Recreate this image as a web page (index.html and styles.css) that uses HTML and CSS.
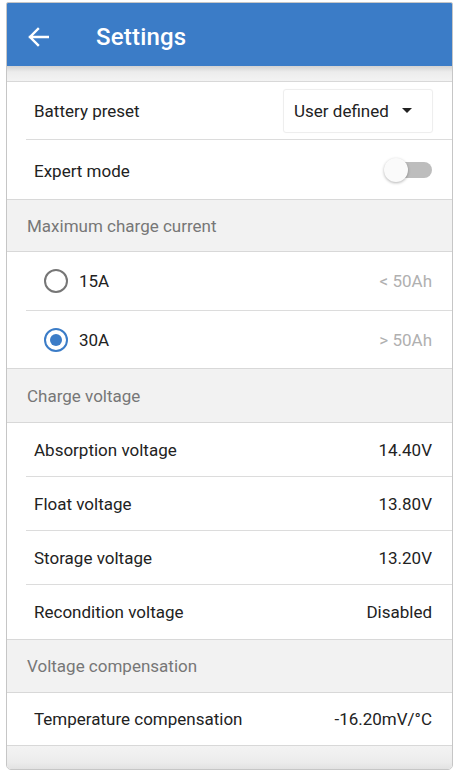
FILE: index.html
```html
<!DOCTYPE html>
<html lang="en">
<head>
  <meta charset="UTF-8" />
  <title>Settings</title>
  <link rel="stylesheet" href="styles.css">
</head>
<body>
  <div class="phone">
    <div class="topbar">
      <svg class="back" width="22" height="20" viewBox="0 0 22 20">
        <path d="M21 10H3M11 2L3 10l8 8" fill="none" stroke="#fff" stroke-width="2.4" stroke-linecap="square"/>
      </svg>
      <span class="title">Settings</span>
    </div>
    <div class="strip"></div>

    <div class="row battery">
      <span>Battery preset</span>
      <div class="dropdown">User defined <span class="caret"></span></div>
    </div>
    <div class="row expert last">
      <span>Expert mode</span>
      <div class="toggle"><span class="thumb"></span></div>
    </div>

    <div class="section h52">Maximum charge current</div>
    <div class="row r59">
      <span class="radio-label"><span class="radio"></span>15A</span>
      <span class="hint">&lt; 50Ah</span>
    </div>
    <div class="row r58 last">
      <span class="radio-label"><span class="radio on"></span>30A</span>
      <span class="hint">&gt; 50Ah</span>
    </div>

    <div class="section h54">Charge voltage</div>
    <div class="row r54"><span>Absorption voltage</span><span>14.40V</span></div>
    <div class="row r54"><span>Float voltage</span><span>13.80V</span></div>
    <div class="row r54"><span>Storage voltage</span><span>13.20V</span></div>
    <div class="row r54 last"><span>Recondition voltage</span><span>Disabled</span></div>

    <div class="section h53">Voltage compensation</div>
    <div class="row r53 last"><span>Temperature compensation</span><span>-16.20mV/°C</span></div>

    <div class="bottom"></div>
  </div>
</body>
</html>
```

FILE: styles.css
```css
body {
  margin: 0;
  background-color: #fff;
  font-family: Roboto, "Noto Sans", sans-serif;
  color: #222;
}

.phone {
  box-sizing: border-box;
  width: 447px;
  height: 768px;
  margin: 2px 0 0 6px;
  border: 1px solid #c6c6c6;
  border-radius: 2px 2px 5px 5px;
  display: flex;
  flex-direction: column;
  overflow: hidden;
}

.topbar {
  height: 63px;
  flex: none;
  background-color: #3b7cc7;
  display: flex;
  align-items: center;
  padding: 4px 0 0 20px;
  box-sizing: border-box;
  color: #fff;
}

.back {
  margin-right: 47px;
}

.title {
  font-size: 24px;
  font-weight: 500;
  letter-spacing: 0.2px;
}

.strip {
  height: 15px;
  flex: none;
  background: linear-gradient(#d2d2d2, #ececec 40%, #f3f3f3);
  border-bottom: 1px solid #d8d8d8;
}

.row {
  flex: none;
  box-sizing: border-box;
  display: flex;
  align-items: center;
  justify-content: space-between;
  margin-left: 19px;
  padding: 0 20px 0 8px;
  border-bottom: 1px solid #dcdcdc;
  font-size: 17px;
}

.row.last {
  border-bottom: none;
}

.battery { height: 58px; }
.expert { height: 59px; padding-top: 2px; }
.r59 { height: 59px; }
.r58 { height: 57px; }
.r54 { height: 54px; }
.r53 { height: 52px; }

.section {
  flex: none;
  box-sizing: border-box;
  display: flex;
  align-items: center;
  padding-left: 20px;
  background-color: #f2f2f2;
  border-top: 1px solid #d8d8d8;
  border-bottom: 1px solid #d8d8d8;
  color: #777;
  font-size: 17px;
}

.h52 { height: 53px; }
.h54 { height: 55px; }
.h53 { height: 54px; }

.dropdown {
  display: flex;
  align-items: center;
  width: 150px;
  height: 44px;
  box-sizing: border-box;
  margin-right: -1px;
  padding-left: 10px;
  border: 1px solid #eeeeee;
  border-radius: 3px;
  box-shadow: 0 0 1px rgba(0, 0, 0, 0.05);
  font-size: 17px;
}

.caret {
  margin-left: 13px;
  width: 0;
  height: 0;
  border-left: 5px solid transparent;
  border-right: 5px solid transparent;
  border-top: 5px solid #222;
}

.toggle {
  position: relative;
  width: 36px;
  height: 16px;
  margin-top: -2px;
  border-radius: 8px;
  background-color: #bdbdbd;
}

.thumb {
  position: absolute;
  left: -12px;
  top: -4px;
  width: 24px;
  height: 24px;
  border-radius: 50%;
  background-color: #fafafa;
  box-shadow: 0 1px 3px rgba(0, 0, 0, 0.3);
}

.radio-label {
  display: flex;
  align-items: center;
}

.radio {
  box-sizing: border-box;
  width: 24px;
  height: 24px;
  margin: 0 11px 0 10px;
  border: 2px solid #767676;
  border-radius: 50%;
  display: flex;
  align-items: center;
  justify-content: center;
}

.radio.on {
  border-color: #3b7cc7;
}

.radio.on::after {
  content: "";
  width: 12px;
  height: 12px;
  border-radius: 50%;
  background-color: #3b7cc7;
}

.hint {
  color: #b0b0b0;
}

.bottom {
  flex: 1;
  border-top: 1px solid #d8d8d8;
  background: linear-gradient(#f3f3f3, #ececec 70%, #e2e2e2);
}
```
